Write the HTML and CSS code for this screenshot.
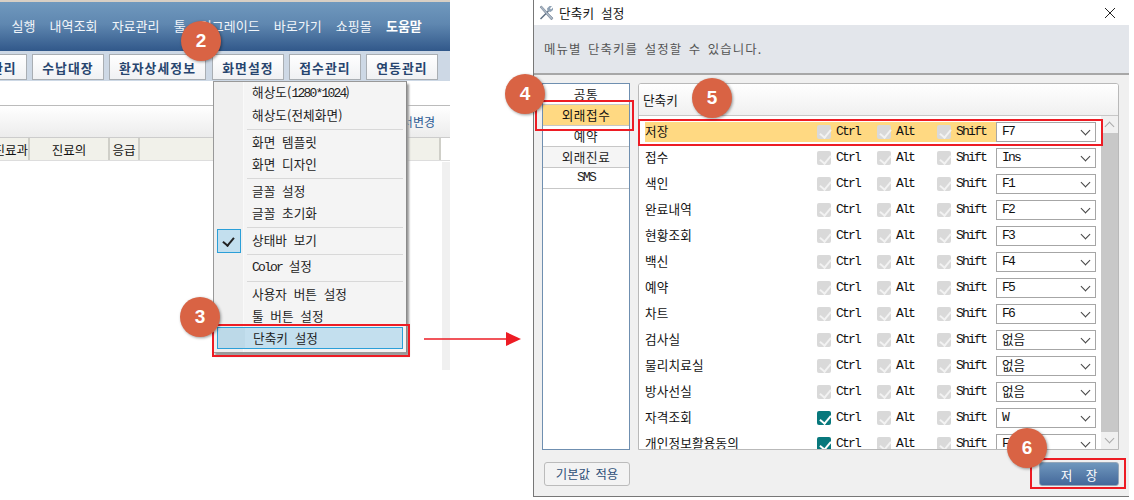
FILE: index.html
```html
<!DOCTYPE html>
<html lang="ko">
<head>
<meta charset="utf-8">
<title>단축키 설정</title>
<link rel="stylesheet" href="styles.css">
</head>
<body>
<div class="page">
  <section class="app">
    <nav class="menubar">
      <span>실행</span><span>내역조회</span><span>자료관리</span><span>툴</span><span>업그레이드</span><span>바로가기</span><span>쇼핑몰</span><b>도움말</b>
    </nav>
    <div class="toolbar">
      <span class="tool first">처방관리</span>
      <span class="tool">수납대장</span>
      <span class="tool wide">환자상세정보</span>
      <span class="tool">화면설정</span>
      <span class="tool">접수관리</span>
      <span class="tool">연동관리</span>
    </div>
    <div class="gap-row"></div>
    <div class="band"><span class="band-link">순서변경</span></div>
    <div class="thead">
      <span class="th c1">진료과</span><span class="th c2">진료의</span><span class="th c3">응급</span><span class="th c4"></span><span class="th c5"></span>
    </div>
    <div class="tbody"><div class="side-strip"></div></div>

    <div class="menu">
      <div class="mi"><span class="t">해상도(<i>1280*1024</i>)</span></div>
      <div class="mi"><span class="t">해상도(전체화면)</span></div>
      <div class="sep"></div>
      <div class="mi"><span class="t">화면 템플릿</span></div>
      <div class="mi"><span class="t">화면 디자인</span></div>
      <div class="sep"></div>
      <div class="mi"><span class="t">글꼴 설정</span></div>
      <div class="mi"><span class="t">글꼴 초기화</span></div>
      <div class="sep"></div>
      <div class="mi checked"><span class="t">상태바 보기</span></div>
      <div class="sep"></div>
      <div class="mi"><span class="t"><i>Color</i> 설정</span></div>
      <div class="sep"></div>
      <div class="mi"><span class="t">사용자 버튼 설정</span></div>
      <div class="mi"><span class="t">툴 버튼 설정</span></div>
      <div class="mi active"><span class="t">단축키 설정</span></div>
    </div>
  </section>

  <section class="dialog">
    <header class="dlg-title">
      <svg class="tools-icon" width="16" height="16" viewBox="0 0 16 16" aria-hidden="true">
        <path d="M2 13.5 10 5.5 11 6.5 3 14.5Z" fill="#5c6d80"/>
        <path d="M9.5 6 9 3.5 11.5 1 14 1 12 3.2 13 4.5 15 2.6 15 5 12.5 7Z" fill="#8fa2b5"/>
        <path d="M2 2 3.5 1 10 8l5 5-1.5 2-5-5.5Z" fill="#a9b6c4" stroke="#56677a" stroke-width=".5"/>
      </svg>
      <span class="dlg-name">단축키 설정</span>
      <svg class="close" width="12" height="12" viewBox="0 0 12 12" aria-hidden="true"><path d="M1 1 11 11M11 1 1 11" stroke="#222" stroke-width="1" fill="none"/></svg>
    </header>
    <div class="dlg-desc">메뉴별 단축키를 설정할 수 있습니다.</div>
    <div class="dlg-body">
      <ul class="cats">
        <li>공통</li>
        <li class="on">외래접수</li>
        <li>예약</li>
        <li class="alt">외래진료</li>
        <li class="lat">SMS</li>
      </ul>
      <div class="panel">
        <div class="panel-head">단축키</div>
        <div class="panel-main">
          <div class="rows">
            <div class="row hl"><span class="n">저장</span><span class="k"><s class="cb"></s><i>Ctrl</i></span><span class="k"><s class="cb"></s><i>Alt</i></span><span class="k"><s class="cb"></s><i>Shift</i></span><span class="sel"><i>F7</i></span></div>
            <div class="row"><span class="n">접수</span><span class="k"><s class="cb"></s><i>Ctrl</i></span><span class="k"><s class="cb"></s><i>Alt</i></span><span class="k"><s class="cb"></s><i>Shift</i></span><span class="sel"><i>Ins</i></span></div>
            <div class="row"><span class="n">색인</span><span class="k"><s class="cb"></s><i>Ctrl</i></span><span class="k"><s class="cb"></s><i>Alt</i></span><span class="k"><s class="cb"></s><i>Shift</i></span><span class="sel"><i>F1</i></span></div>
            <div class="row"><span class="n">완료내역</span><span class="k"><s class="cb"></s><i>Ctrl</i></span><span class="k"><s class="cb"></s><i>Alt</i></span><span class="k"><s class="cb"></s><i>Shift</i></span><span class="sel"><i>F2</i></span></div>
            <div class="row"><span class="n">현황조회</span><span class="k"><s class="cb"></s><i>Ctrl</i></span><span class="k"><s class="cb"></s><i>Alt</i></span><span class="k"><s class="cb"></s><i>Shift</i></span><span class="sel"><i>F3</i></span></div>
            <div class="row"><span class="n">백신</span><span class="k"><s class="cb"></s><i>Ctrl</i></span><span class="k"><s class="cb"></s><i>Alt</i></span><span class="k"><s class="cb"></s><i>Shift</i></span><span class="sel"><i>F4</i></span></div>
            <div class="row"><span class="n">예약</span><span class="k"><s class="cb"></s><i>Ctrl</i></span><span class="k"><s class="cb"></s><i>Alt</i></span><span class="k"><s class="cb"></s><i>Shift</i></span><span class="sel"><i>F5</i></span></div>
            <div class="row"><span class="n">차트</span><span class="k"><s class="cb"></s><i>Ctrl</i></span><span class="k"><s class="cb"></s><i>Alt</i></span><span class="k"><s class="cb"></s><i>Shift</i></span><span class="sel"><i>F6</i></span></div>
            <div class="row"><span class="n">검사실</span><span class="k"><s class="cb"></s><i>Ctrl</i></span><span class="k"><s class="cb"></s><i>Alt</i></span><span class="k"><s class="cb"></s><i>Shift</i></span><span class="sel none">없음</span></div>
            <div class="row"><span class="n">물리치료실</span><span class="k"><s class="cb"></s><i>Ctrl</i></span><span class="k"><s class="cb"></s><i>Alt</i></span><span class="k"><s class="cb"></s><i>Shift</i></span><span class="sel none">없음</span></div>
            <div class="row"><span class="n">방사선실</span><span class="k"><s class="cb"></s><i>Ctrl</i></span><span class="k"><s class="cb"></s><i>Alt</i></span><span class="k"><s class="cb"></s><i>Shift</i></span><span class="sel none">없음</span></div>
            <div class="row"><span class="n">자격조회</span><span class="k"><s class="cb teal"></s><i>Ctrl</i></span><span class="k"><s class="cb"></s><i>Alt</i></span><span class="k"><s class="cb"></s><i>Shift</i></span><span class="sel"><i>W</i></span></div>
            <div class="row"><span class="n">개인정보활용동의</span><span class="k"><s class="cb teal"></s><i>Ctrl</i></span><span class="k"><s class="cb"></s><i>Alt</i></span><span class="k"><s class="cb"></s><i>Shift</i></span><span class="sel"><i>F8</i></span></div>
          </div>
          <div class="scroll">
            <span class="arrow up"></span>
            <span class="thumb"></span>
            <span class="arrow down"></span>
          </div>
        </div>
      </div>
    </div>
    <footer class="dlg-foot">
      <span class="btn-default">기본값 적용</span>
      <span class="btn-save">저 장</span>
    </footer>
  </section>

  <div class="redbox rb-menu"></div>
  <div class="redbox rb-cat"></div>
  <div class="redbox rb-row"></div>
  <div class="redbox rb-save"></div>

  <svg class="pointer" width="98" height="16" viewBox="0 0 98 16" aria-hidden="true">
    <path d="M0 8H82" stroke="#ed1c24" stroke-width="1.5"/>
    <path d="M82 1 97 8 82 15Z" fill="#ed1c24"/>
  </svg>

  <span class="badge b2">2</span>
  <span class="badge b3">3</span>
  <span class="badge b4">4</span>
  <span class="badge b5">5</span>
  <span class="badge b6">6</span>
</div>
</body>
</html>
```
FILE: styles.css
```css
* { box-sizing: border-box; }
html, body { margin: 0; padding: 0; background: #fff; }
body { font-family: "Noto Sans CJK KR", "Liberation Sans", sans-serif; font-size: 13px; color: #111; }
i { font-family: "Liberation Mono", monospace; font-style: normal; font-size: 13px; letter-spacing: -1.8px; }
s { text-decoration: none; }
ul { list-style: none; margin: 0; padding: 0; }

.page { position: relative; display: flex; align-items: flex-start; width: 1134px; height: 500px; overflow: hidden; background: #fff; }

/* left application crop */
.app { position: relative; width: 450px; height: 370px; margin-right: 83px; overflow: hidden; flex: none; }
.menubar { display: flex; align-items: center; gap: 14.2px; height: 51px; padding: 0 0 2px 11.5px; border-top: 2px solid #d8cfc4; background: linear-gradient(#7099be, #5f87b0 45%, #31588a); color: #f2f6fa; font-size: 13px; white-space: nowrap; }
.menubar b { font-weight: 700; color: #fff; }
.toolbar { display: flex; gap: 5px; height: 30px; padding: 3px 0 0; background: #cdd8e5; }
.tool { display: flex; align-items: center; justify-content: center; flex: none; width: 72px; height: 26px; border: 1px solid #a9aeb3; background: linear-gradient(#fff, #f0f1f3); color: #27456f; font-weight: 700; font-size: 12.8px; letter-spacing: 1.1px; white-space: nowrap; overflow: hidden; }
.tool.first { margin-left: -45px; }
.tool.wide { width: 97px; margin-right: 1px; }
.gap-row { height: 24px; background: #fff; }
.band { display: flex; justify-content: flex-end; align-items: center; height: 33px; border-top: 1px solid #bbb; border-bottom: 1px solid #ccc; background: linear-gradient(#fff, #ececec); padding-right: 15px; }
.band-link { color: #2b5a94; font-size: 12px; }
.thead { display: flex; height: 23px; background: #f1f1ea; border-bottom: 1px solid #ddd; }
.th { display: flex; align-items: center; justify-content: center; flex: none; border-right: 2px solid #cfcfc8; font-size: 12.5px; white-space: nowrap; overflow: hidden; }
.c1 { width: 30px; justify-content: flex-end; }
.c2 { width: 80px; }
.c3 { width: 30px; }
.c4 { width: 301px; }
.c5 { width: 9px; background: #fff; border: 0; }
.tbody { position: relative; height: 209px; }
.side-strip { position: absolute; top: 1px; right: 0; bottom: 0; width: 8px; background: #f0f0f0; }

.menu { position: absolute; left: 213px; top: 81px; width: 194px; height: 272px; padding: 0 1px; border: 1px solid #999; border-right-color: #8a8a8a; background: linear-gradient(90deg, #efefef 29px, #f9f9f9 29px, #f9f9f9 30px, #f4f4f4 30px); box-shadow: 2px 3px 2px #999; }
.mi { position: relative; height: 22px; display: flex; align-items: center; padding-left: 37px; font-size: 12.6px; letter-spacing: .1px; word-spacing: 3px; white-space: nowrap; color: #222; }
.mi .t { line-height: 20px; }
.sep { height: 1px; margin: 3px 2px 1px 32px; background: #d8d8d8; }
.mi.checked::before { content: ""; position: absolute; left: 2px; top: 0; width: 22px; height: 22px; border: 1px solid #2b9fd8; background: #c3dfee; }
.mi.checked::after { content: ""; position: absolute; left: 10px; top: 6px; width: 5px; height: 9px; border: solid #222; border-width: 0 2px 2px 0; transform: rotate(40deg); }
.mi.active { margin-left: 2px; margin-right: 2px; padding-left: 35px; border: 1px solid #2b9fd8; background: linear-gradient(90deg, #bcd9e8 27px, #c3dfee 27px); }

/* dialog */
.dialog { display: flex; flex-direction: column; width: 596px; height: 497px; flex: none; border-left: 1px solid #777; border-bottom: 1px solid #777; background: #f0f0f0; }
.dlg-title { display: flex; align-items: center; height: 25px; padding: 0 9px 0 4px; background: #fff; }
.tools-icon { flex: none; }
.dlg-name { margin-left: 5px; font-size: 12.6px; word-spacing: 3px; letter-spacing: .2px; }
.close { margin-left: auto; margin-right: 4px; }
.dlg-desc { height: 50px; padding: 14px 0 0 10px; background: #e3e6eb; border-bottom: 2px solid #a7a7a7; color: #555; font-size: 12.4px; line-height: 20px; letter-spacing: 1.1px; word-spacing: 2px; }
.dlg-body { display: flex; height: 375px; padding: 8px 0 0 8px; }
.cats { width: 88px; height: 367px; margin-right: 8px; border: 1px solid #6f8fb0; background: #fff; flex: none; text-align: center; }
.cats li { height: 21px; line-height: 19px; border-bottom: 1px solid #c7c7c7; font-size: 12.6px; color: #222; letter-spacing: .6px; }
.cats .on { background: #ffd982; color: #111; }
.cats .alt { background: #f5f5f5; }
.cats .lat { font-family: "Liberation Mono", monospace; font-size: 13px; letter-spacing: -1.8px; }
.panel { display: flex; flex-direction: column; width: 481px; height: 367px; border: 1px solid #b9b9b9; border-radius: 3px 3px 0 0; background: #fff; overflow: hidden; flex: none; }
.panel-head { height: 32px; padding: 6px 0 0 4px; line-height: 20px; background: linear-gradient(#fff, #f0f0f0); border-bottom: 1px solid #c7c7c7; font-size: 12.6px; }
.panel-main { display: flex; flex: 1; min-height: 0; }
.rows { width: 463px; padding: 6px 0 0 6px; overflow: hidden; }
.row { display: grid; grid-template-columns: 172px 60px 60px 59px 100px; align-items: center; width: 451px; height: 20px; margin-bottom: 6px; }
.row.hl { background: linear-gradient(90deg, #ffd982 351px, #fff 351px); }
.n { font-size: 12.6px; line-height: 18px; height: 20px; white-space: nowrap; letter-spacing: .15px; }
.k { display: flex; align-items: center; gap: 5px; }
.k i { line-height: 18px; }
.cb { position: relative; width: 14px; height: 14px; border-radius: 2px; background: #d9d9d9; flex: none; }
.cb::after { content: ""; position: absolute; left: 4.5px; top: 1.5px; width: 5px; height: 9px; border: solid #f2f2f2; border-width: 0 2px 2px 0; transform: rotate(40deg); }
.cb.teal { background: #08787c; }
.cb.teal::after { border-color: #fff; }
.sel { position: relative; display: flex; align-items: center; height: 20px; padding-left: 5px; border: 1px solid #a6a6a6; background: #fff; font-size: 12.6px; line-height: 16px; }
.sel.none { padding-bottom: 2px; }
.sel::after { content: ""; position: absolute; right: 6px; top: 4px; width: 6px; height: 6px; border: solid #444; border-width: 0 1.5px 1.5px 0; transform: rotate(45deg); }
.scroll { display: flex; flex-direction: column; width: 17px; flex: none; background: #f0f0f0; }
.thumb { flex: 1; background: #c8c8c8; }
.arrow { position: relative; height: 17px; flex: none; }
.arrow::after { content: ""; position: absolute; left: 5px; width: 6px; height: 6px; border: solid #aaa; border-width: 1px 0 0 1px; transform: rotate(45deg); top: 7px; }
.arrow.down::after { transform: rotate(225deg); top: 3px; }
.dlg-foot { display: flex; justify-content: space-between; padding: 12px 10px 0 10px; }
.btn-default { display: flex; align-items: center; justify-content: center; width: 86px; height: 24px; border: 1px solid #bbb; border-radius: 3px; background: #f3f3f3; color: #2f5078; font-size: 12.4px; word-spacing: 2px; }
.btn-save { display: flex; align-items: center; justify-content: center; width: 80px; height: 24px; border: 1px solid #94a6b8; border-radius: 3px; background: linear-gradient(#6f97bd, #44689a); color: #fff; font-size: 12.6px; word-spacing: 10px; }

/* overlays */
.redbox { position: absolute; border: 2px solid #ed1c24; }
.rb-menu { left: 212px; top: 324px; width: 198px; height: 33px; }
.rb-cat { left: 535px; top: 100px; width: 99px; height: 31px; }
.rb-row { left: 638px; top: 119px; width: 465px; height: 27px; }
.rb-save { left: 1030px; top: 458px; width: 96px; height: 31px; }
.pointer { position: absolute; left: 424px; top: 331px; }
.badge { position: absolute; display: flex; align-items: center; justify-content: center; width: 40px; height: 40px; border-radius: 50%; background: #d96344; color: #fff; font: 700 19px "Liberation Sans", sans-serif; box-shadow: 1px 1px 3px rgba(0,0,0,.4); }
.b2 { left: 181px; top: 21px; }
.b3 { left: 180px; top: 297px; }
.b4 { left: 505px; top: 74px; }
.b5 { left: 692px; top: 78px; }
.b6 { left: 1007px; top: 428px; }
```
